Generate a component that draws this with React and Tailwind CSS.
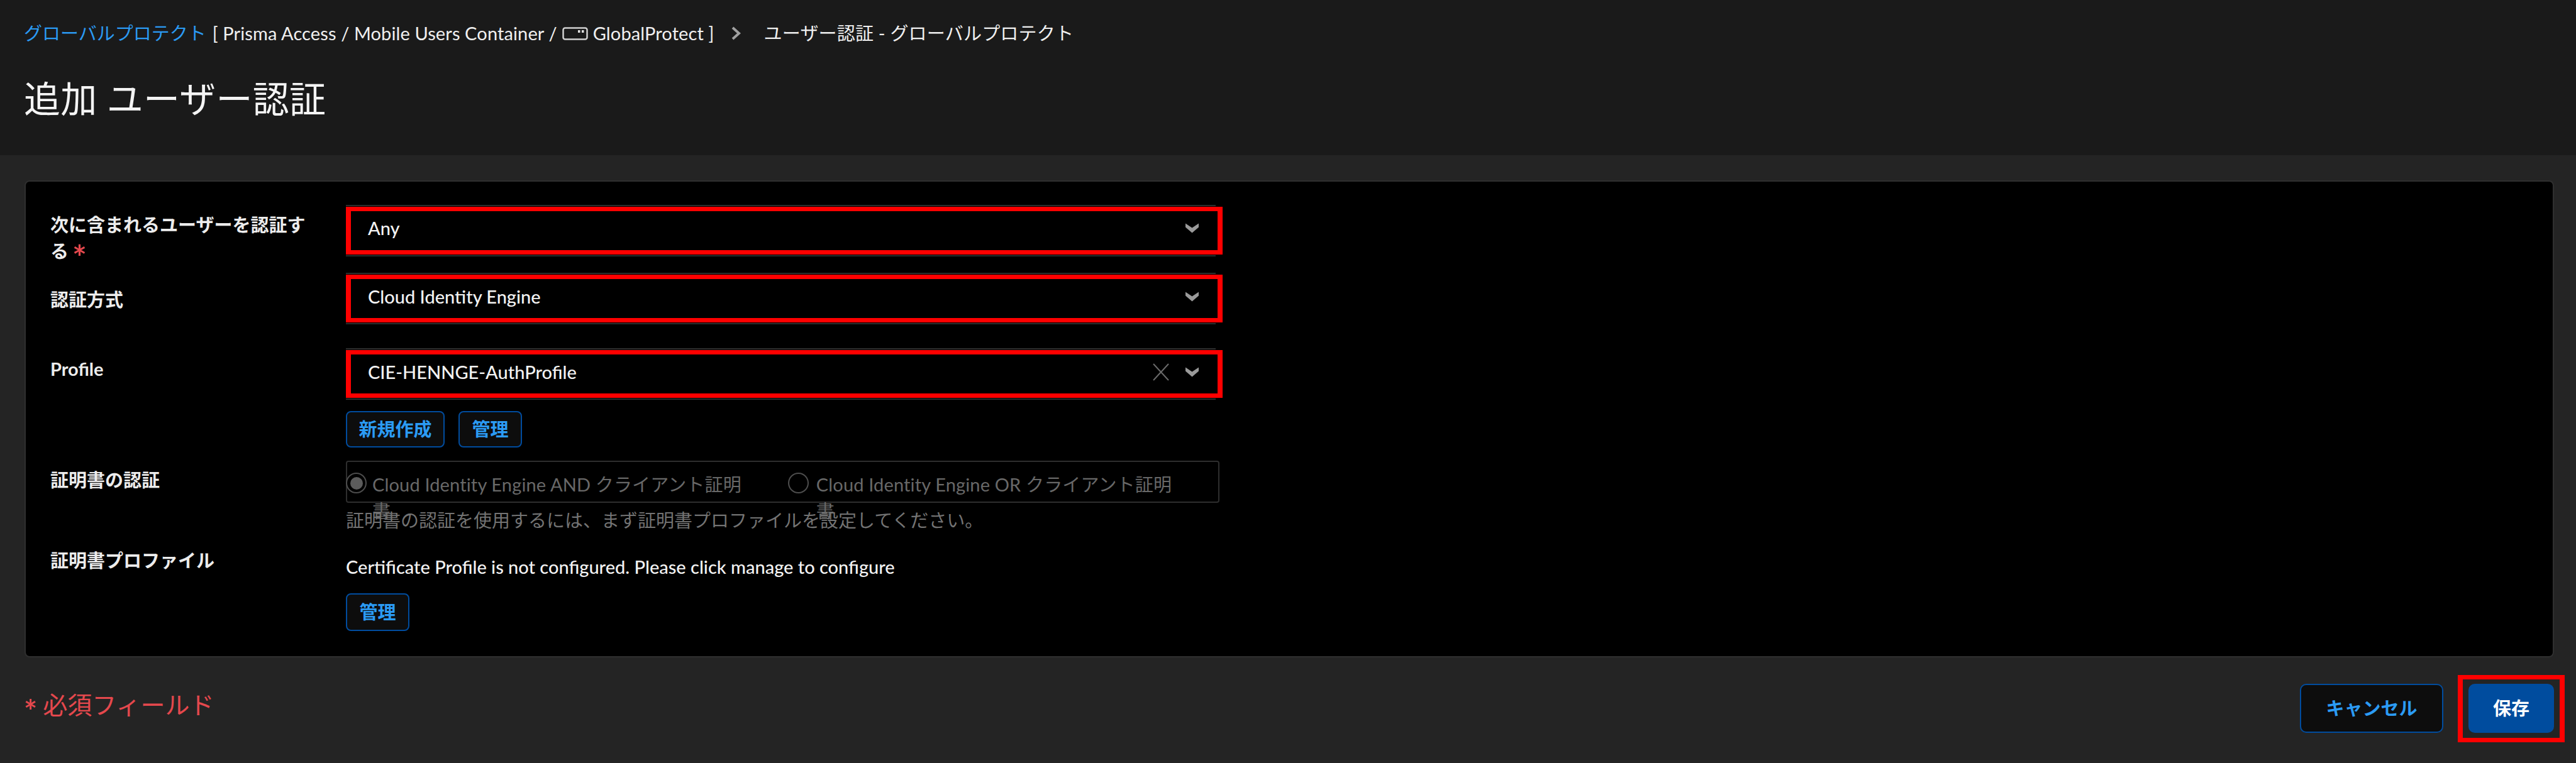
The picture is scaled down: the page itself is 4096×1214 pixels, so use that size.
import React from "react";

const Chev = () => (
  <svg width="23" height="16" viewBox="0 0 23 16" className="shrink-0">
    <path d="M1 0.5 L11.5 7.5 L22 0.5 L22 6.5 L11.5 15.5 L1 6.5 Z" fill="#9a9a9a" />
  </svg>
);

const RedBox = ({ className }) => (
  <div className={"absolute border-solid border-[#ff0000] border-t-[7px] border-b-[7px] border-l-[8px] border-r-[8px] pointer-events-none " + className} />
);

const Select = ({ value, clear, className }) => (
  <div className={"relative w-[1383px] h-[82px] border-y-2 border-[#2e2e2e] flex items-center pl-[35px] pr-[26px] " + (className || "pb-[6px]")}>
    <span className="text-[29px] font-medium text-[#f2f2f2] flex-1">{value}</span>
    {clear && (
      <svg width="28" height="28" viewBox="0 0 28 28" className="mr-[24px] shrink-0">
        <path d="M2 1 L26 27 M26 1 L2 27" stroke="#6a6a6a" strokeWidth="2" fill="none" />
      </svg>
    )}
    <Chev />
    <RedBox className="left-0 right-[-11px] top-[1px] h-[76px]" />
  </div>
);

const Label = ({ className, children }) => (
  <div className={"w-[430px] mr-[40px] shrink-0 text-[29px] leading-[42px] font-bold text-[#ececec] " + className}>{children}</div>
);

const LinkBtn = ({ children, className }) => (
  <button className={"h-[58px] rounded-[8px] border-2 border-[#004c9e] bg-[#0d0d0d] text-[29px] font-bold text-[#2b9bf4] flex items-center justify-center " + className}>
    {children}
  </button>
);

const Radio = ({ checked }) => (
  <span className="w-[33px] h-[33px] rounded-full border-2 border-[#4d4d4d] shrink-0 flex items-center justify-center">
    {checked && <span className="w-[20px] h-[20px] rounded-full bg-[#5c5c5c]" />}
  </span>
);

export default function App() {
  return (
    <div className="w-[4096px] h-[1214px] overflow-hidden bg-[#242424] font-['Lato','Noto_Sans_CJK_JP',sans-serif]">
      <header className="h-[247px] bg-[#1a1a1a] pl-[38px] pt-[33px]">
        <div className="flex items-center h-[40px] text-[29px] text-[#f0f0f0] whitespace-nowrap">
          <span className="text-[#2b9bf4]">グローバルプロテクト</span>
          <span className="ml-[10px] tracking-[0.12px]">[ Prisma Access / Mobile Users Container /</span>
          <svg width="41" height="21" viewBox="0 0 41 21" className="mx-[8px] shrink-0">
            <rect x="1.5" y="1.5" width="38" height="18" rx="3" fill="none" stroke="#cfcfcf" strokeWidth="2.5" />
            <rect x="25" y="5" width="3.5" height="4" fill="#e0e0e0" />
            <rect x="31" y="5" width="3.5" height="4" fill="#e0e0e0" />
          </svg>
          <span className="tracking-[0.12px]">GlobalProtect ]</span>
          <svg width="17" height="22" viewBox="0 0 17 22" className="ml-[26px] mr-[36px] shrink-0">
            <path d="M3 2 L13 11 L3 20" fill="none" stroke="#a0a0a0" strokeWidth="4" />
          </svg>
          <span className="tracking-[0.2px]">ユーザー認証 - グローバルプロテクト</span>
        </div>
        <h1 className="mt-[49px] text-[58px] leading-[70px] font-normal tracking-[0.3px] text-[#f4f4f4] whitespace-nowrap">追加 ユーザー認証</h1>
      </header>

      <main className="ml-[39px] mr-[35px] mt-[40px] h-[759px] bg-black border-2 border-[#2f2f2f] rounded-[8px] pl-[39px] pt-[37px]">
        <div className="flex h-[82px]">
          <Label className="pt-[11px]">
            次に含まれるユーザーを認証する<span className="inline-block ml-[6px] text-[54px] leading-[42px] align-top translate-y-[9px] text-[#e5484d]">*</span>
          </Label>
          <Select value="Any" className="pb-[9px]" />
        </div>
        <div className="flex mt-[26px]">
          <Label className="pt-[22px]">認証方式</Label>
          <Select value="Cloud Identity Engine" />
        </div>
        <div className="flex mt-[38px]">
          <Label className="pt-[12px]">Profile</Label>
          <div>
            <Select value="CIE-HENNGE-AuthProfile" clear />
            <div className="flex gap-[22px] mt-[18px]">
              <LinkBtn className="w-[157px]">新規作成</LinkBtn>
              <LinkBtn className="w-[101px]">管理</LinkBtn>
            </div>
          </div>
        </div>
        <div className="flex mt-[21px]">
          <Label className="pt-[10px]">証明書の認証</Label>
          <div>
            <div className="w-[1389px] h-[67px] border-2 border-[#2e2e2e] rounded-[4px] flex text-[29px] leading-[42px] tracking-[0.15px] text-[#686868]">
              <div className="flex items-start pt-[17px] -ml-[2px]">
                <Radio checked />
                <span className="ml-[9px] whitespace-nowrap -mt-[2px]">Cloud Identity Engine AND クライアント証明<br /><span className="inline-block">書</span></span>
              </div>
              <div className="flex items-start pt-[17px] ml-[74px]">
                <Radio />
                <span className="ml-[12px] whitespace-nowrap -mt-[2px]">Cloud Identity Engine OR クライアント証明<br /><span className="inline-block">書</span></span>
              </div>
            </div>
            <div className="mt-[8px] h-[40px] leading-[40px] text-[29px] text-[#737373] whitespace-nowrap">証明書の認証を使用するには、まず証明書プロファイルを設定してください。</div>
          </div>
        </div>
        <div className="flex mt-[21px]">
          <Label className="pt-[2px]">証明書プロファイル</Label>
          <div className="pt-[13px]">
            <div className="h-[40px] leading-[40px] text-[29px] font-medium text-[#f2f2f2] whitespace-nowrap">Certificate Profile is not configured. Please click manage to configure</div>
            <LinkBtn className="w-[101px] mt-[22px] h-[60px]">管理</LinkBtn>
          </div>
        </div>
      </main>

      <footer className="flex items-center justify-between mt-[42px] pl-[38px] pr-[35px]">
        <div className="flex items-center text-[39px] leading-[50px] text-[#e5484d] -mt-[12px] whitespace-nowrap">
          <span className="text-[50px] font-bold translate-y-[10px]">*</span>
          <span className="ml-[9px]">必須フィールド</span>
        </div>
        <div className="flex gap-[40px]">
          <button className="w-[228px] h-[78px] rounded-[10px] border-2 border-[#004c9e] bg-[#0d0d0d] text-[29px] font-bold text-[#2b9bf4]">キャンセル</button>
          <div className="relative">
            <button className="w-[136px] h-[78px] rounded-[10px] bg-[#004c9e] text-[29px] font-bold text-white">保存</button>
            <RedBox className="left-[-17px] right-[-17px] top-[-14px] bottom-[-15px]" />
          </div>
        </div>
      </footer>
    </div>
  );
}
